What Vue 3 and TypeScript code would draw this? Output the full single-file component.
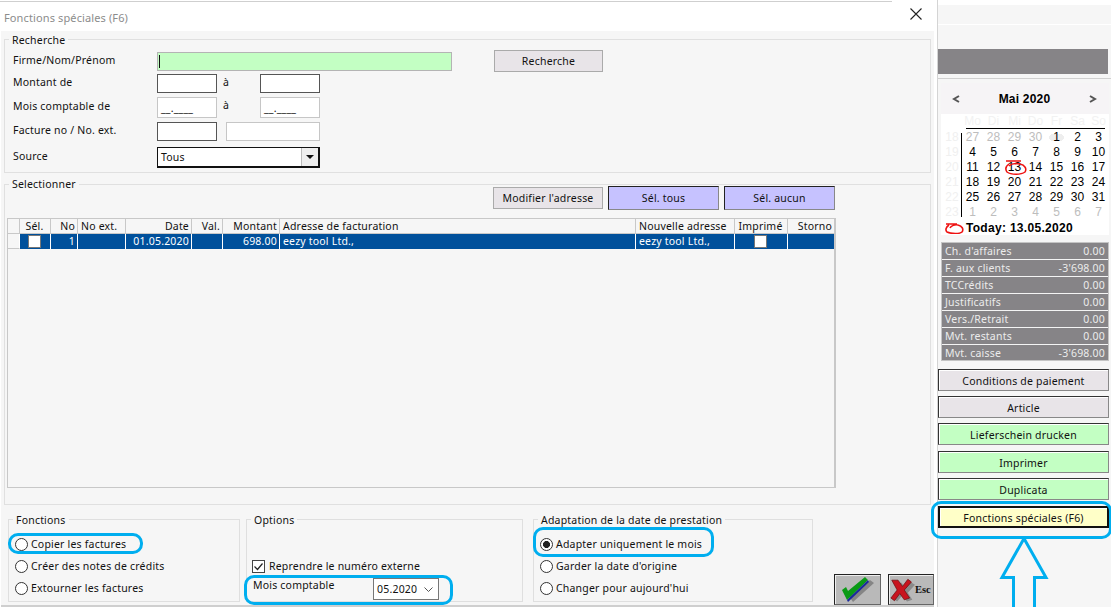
<script setup lang="ts">
interface Col { label: string; align: 'l' | 'r' | 'c'; value?: string; check?: boolean }

const columns: Col[] = [
  { label: '', align: 'l' },
  { label: 'Sél.', align: 'c', check: true },
  { label: 'No', align: 'r', value: '1' },
  { label: 'No ext.', align: 'l', value: '' },
  { label: 'Date', align: 'r', value: '01.05.2020' },
  { label: 'Val.', align: 'r', value: '' },
  { label: 'Montant', align: 'r', value: '698.00' },
  { label: 'Adresse de facturation', align: 'l', value: 'eezy tool Ltd.,' },
  { label: 'Nouvelle adresse', align: 'l', value: 'eezy tool Ltd.,' },
  { label: 'Imprimé', align: 'c', check: true },
  { label: 'Storno', align: 'r', value: '' }
]

const weekdays = ['', 'Mo', 'Di', 'Mi', 'Do', 'Fr', 'Sa', 'So']
const weeks: { no: number; days: number[] }[] = [
  { no: 18, days: [27, 28, 29, 30, 1, 2, 3] },
  { no: 19, days: [4, 5, 6, 7, 8, 9, 10] },
  { no: 20, days: [11, 12, 13, 14, 15, 16, 17] },
  { no: 21, days: [18, 19, 20, 21, 22, 23, 24] },
  { no: 22, days: [25, 26, 27, 28, 29, 30, 31] },
  { no: 23, days: [1, 2, 3, 4, 5, 6, 7] }
]
function isMuted(w: number, d: number): boolean {
  return (w === 0 && d > 20) || w === 5
}

const stats = [
  ['Ch. d\'affaires', '0.00'],
  ['F. aux clients', '-3\'698.00'],
  ['TCCrédits', '0.00'],
  ['Justificatifs', '0.00'],
  ['Vers./Retrait', '0.00'],
  ['Mvt. restants', '0.00'],
  ['Mvt. caisse', '-3\'698.00']
]

const sideButtons = [
  { label: 'Conditions de paiement', kind: 'grey' },
  { label: 'Article', kind: 'grey' },
  { label: 'Lieferschein drucken', kind: 'green wide-gap' },
  { label: 'Imprimer', kind: 'green' },
  { label: 'Duplicata', kind: 'green' },
  { label: 'Fonctions spéciales (F6)', kind: 'yellow' }
]

const fonctions = [
  { label: 'Copier les factures', on: false },
  { label: 'Créer des notes de crédits', on: false },
  { label: 'Extourner les factures', on: false }
]
const adaptation = [
  { label: 'Adapter uniquement le mois', on: true },
  { label: 'Garder la date d\'origine', on: false },
  { label: 'Changer pour aujourd\'hui', on: false }
]
</script>

<template>
  <div class="page">
    <div class="main">
      <header class="title">
        <span>Fonctions spéciales (F6)</span>
        <svg class="close" width="12" height="12" viewBox="0 0 12 12">
          <path d="M.5.5l11 11M11.5.5l-11 11" stroke="#222" stroke-width="1.1" fill="none" />
        </svg>
      </header>

      <div class="body">
        <fieldset class="group search">
          <legend>Recherche</legend>
          <div class="row r1">
            <label>Firme/Nom/Prénom</label>
            <div class="input firm"><i class="caret"></i></div>
            <button class="btn recherche">Recherche</button>
          </div>
          <div class="row r2">
            <label>Montant de</label>
            <div class="input dark"></div>
            <span class="a">à</span>
            <div class="input dark"></div>
          </div>
          <div class="row r3">
            <label>Mois comptable de</label>
            <div class="input light tall mask">__.____</div>
            <span class="a">à</span>
            <div class="input light tall mask">__.____</div>
          </div>
          <div class="row r4">
            <label>Facture no / No. ext.</label>
            <div class="input dark"></div>
            <div class="input light ext"></div>
          </div>
          <div class="row r5">
            <label>Source</label>
            <div class="source">
              <span>Tous</span>
              <span class="drop"><i></i></span>
            </div>
          </div>
        </fieldset>

        <fieldset class="group select">
          <legend>Selectionner</legend>
          <div class="actions">
            <button class="btn">Modifier l'adresse</button>
            <button class="btn lilac">Sél. tous</button>
            <button class="btn lilac">Sél. aucun</button>
          </div>
          <div class="table">
            <div class="tr head">
              <div v-for="(c, i) in columns" :key="i" class="td" :class="c.align">{{ c.label }}</div>
            </div>
            <div class="tr data">
              <div v-for="(c, i) in columns" :key="i" class="td" :class="[c.align, { ind: i === 0 }]">
                <i v-if="c.check" class="cell-check"></i>
                <template v-else>{{ c.value }}</template>
              </div>
            </div>
          </div>
        </fieldset>

        <div class="bottom">
          <fieldset class="group fn">
            <legend>Fonctions</legend>
            <div v-for="o in fonctions" :key="o.label" class="radio">
              <i class="dot" :class="{ on: o.on }"></i>{{ o.label }}
            </div>
          </fieldset>
          <fieldset class="group opt">
            <legend>Options</legend>
            <div class="check">
              <svg width="13" height="13" viewBox="0 0 13 13">
                <rect x=".5" y=".5" width="12" height="12" fill="#fff" stroke="#444" />
                <path d="M2.5 6.5l3 3 5-6" fill="none" stroke="#222" stroke-width="1.2" />
              </svg>
              Reprendre le numéro externe
            </div>
            <div class="month">
              <span>Mois comptable</span>
              <div class="month-select">
                <span>05.2020</span>
                <svg width="9" height="5" viewBox="0 0 9 5"><path d="M.5.5l4 4 4-4" fill="none" stroke="#555" /></svg>
              </div>
            </div>
          </fieldset>
          <fieldset class="group adapt">
            <legend>Adaptation de la date de prestation</legend>
            <div v-for="o in adaptation" :key="o.label" class="radio">
              <i class="dot" :class="{ on: o.on }"></i>{{ o.label }}
            </div>
          </fieldset>
          <div class="confirm">
            <button class="bevel">
              <svg width="34" height="26" viewBox="0 0 34 26">
                <path d="M7 18l5 7L33 6l-4-3L13 17l-3-3z" fill="#858585" />
                <path d="M1 13l5 10L27 3l-3-3L7 14l-2-4z" fill="#0a9a16" />
                <path d="M6 23L27 3l1 2L7 25z" fill="#1b2a9c" />
              </svg>
            </button>
            <button class="bevel esc">
              <svg width="25" height="26" viewBox="0 0 28 26">
                <path d="M6 5h7l4 6 6-7 5 3-8 9 5 8-6 2-5-7-6 7-4-3 7-8z" fill="#8a8a8a" />
                <path d="M2 2h7l5 7 6-8 4 3-8 9 6 9-6 2-5-7-6 8-4-3 7-9z" fill="#c8141e" stroke="#6a0b10" stroke-width=".8" />
              </svg>
              <b>Esc</b>
            </button>
          </div>
        </div>
      </div>
    </div>

    <aside class="side">
      <div class="side-top"></div>
      <div class="side-top second"></div>
      <div class="side-bar"></div>
      <div class="side-rule"></div>

      <div class="calendar">
        <div class="cal-head">
          <svg width="8" height="8" viewBox="0 0 8 8"><path d="M7 1L2 4l5 3" fill="none" stroke="#555" stroke-width="2" /></svg>
          <b>Mai 2020</b>
          <svg width="8" height="8" viewBox="0 0 8 8"><path d="M1 1l5 3-5 3" fill="none" stroke="#555" stroke-width="2" /></svg>
        </div>
        <div class="cal-grid names">
          <span v-for="(w, i) in weekdays" :key="i">{{ w }}</span>
        </div>
        <div class="cal-body">
          <div v-for="(w, wi) in weeks" :key="w.no" class="cal-grid">
            <span class="wk">{{ w.no }}</span>
            <span
              v-for="(d, di) in w.days"
              :key="di"
              :class="{ muted: isMuted(wi, d), first: wi === 0 && d === 1 }"
            >{{ d }}</span>
          </div>
          <svg class="ring" width="22" height="15" viewBox="0 0 22 15">
            <path d="M1 1h15M4 4C1 6 0 9 2 12c4 3 14 3 18 0 2-3 0-7-5-8-5-1-9 0-11 2" fill="none" stroke="#ee1111" stroke-width="1.5" />
          </svg>
        </div>
        <div class="today">
          <svg width="19" height="12" viewBox="0 0 19 12">
            <path d="M1 2h11M4 3C1 5 0 8 2 10c4 2 13 2 15 0 2-3 0-6-4-7-3-1-7 1-8 3" fill="none" stroke="#ee1111" stroke-width="1.6" />
          </svg>
          <b>Today: 13.05.2020</b>
        </div>
      </div>

      <div class="stats">
        <div v-for="s in stats" :key="s[0]" class="stat">
          <span>{{ s[0] }}</span><span>{{ s[1] }}</span>
        </div>
      </div>

      <div class="side-buttons">
        <button v-for="b in sideButtons" :key="b.label" class="side-btn" :class="b.kind">{{ b.label }}</button>
      </div>
    </aside>

    <!-- annotation overlays drawn over the captured window -->
    <i class="mark m-copier"></i>
    <i class="mark m-mois"></i>
    <i class="mark m-adapter"></i>
    <i class="mark m-f6"></i>
    <svg class="arrow" width="50" height="70" viewBox="0 0 50 70">
      <path d="M14.5 70V40.5H3L25 1.5l22 39H35.5V70" fill="#f6f6f6" stroke="#00aeef" stroke-width="3" />
    </svg>
  </div>
</template>

<style>
html, body { margin: 0; background: #fff; }
</style>

<style scoped>
.page {
  position: relative;
  display: flex;
  width: 1111px;
  height: 607px;
  overflow: hidden;
  background: #fff;
  color: #111;
  font-family: "Noto Sans", "Open Sans", sans-serif;
  font-size: 10.5px;
  letter-spacing: .2px;
}
.main { width: 937px; flex: none; display: flex; flex-direction: column; }
.title {
  position: relative;
  height: 31px;
  box-sizing: border-box;
  padding: 10px 0 0 4px;
  flex: none;
  color: #8c8c8c;
  font-size: 11px;
  letter-spacing: .12px;
  line-height: 16px;
  background: linear-gradient(#fff 1px, #cfcfcf 1px, #cfcfcf 2px, #fff 2px) no-repeat 0 0 / 892px 2px;
}
.close { position: absolute; left: 910px; top: 8px; }
.body {
  flex: 1;
  margin-left: 1px;
  margin-right: 3px;
  background: #f6f6f6;
  display: flex;
  flex-direction: column;
  border-bottom: 2px solid #cfcfcf;
}
.group {
  margin: 0;
  padding: 0;
  min-width: 0;
  box-sizing: border-box;
  border: 1px solid #e0e0e0;
}
.group legend {
  margin-left: 4px;
  padding: 0 3px;
  line-height: 15px;
  font-size: 10.5px;
}
.search { margin: 1px 3px 0 3px; height: 141px; padding: 3px 0 0 8px; position: relative; }
.search legend { margin-left: -4px; position: relative; top: 1px; }
.row { display: flex; align-items: flex-start; }
.row label { width: 144px; flex: none; line-height: 15px; }
.r1 { height: 22px; }
.r1 label { margin-top: 3px; }
.r2 { margin-top: 2px; height: 19px; }
.r3 { margin-top: 4px; height: 21px; }
.r4 { margin-top: 4px; height: 19px; }
.r5 { margin-top: 6px; height: 21px; }
.r2 label { margin-top: 1px; }
.r3 label { margin-top: 2px; }
.r4 label { margin-top: 1px; }
.r5 label { margin-top: 2px; }
.input { box-sizing: border-box; width: 60px; height: 19px; background: #fff; }
.input.dark { border: 1px solid #555; }
.input.light { border: 1px solid #c6c6c6; }
.input.tall { height: 21px; }
.input.ext { width: 94px; margin-left: 9px; }
.input.firm { width: 295px; margin-top: 2px; background: #c3ffc3; border: 1px solid #b4b4b4; padding: 2px 0 0 1px; }
.caret { display: block; width: 1px; height: 13px; background: #111; }
.mask { font-size: 10.5px; line-height: 21px; padding-left: 3px; }
.a { width: 43px; flex: none; padding-left: 6px; box-sizing: border-box; line-height: 15px; margin-top: 1px; }
.recherche { margin-left: 42px; width: 109px; height: 22px; }
.btn {
  box-sizing: border-box;
  height: 22px;
  padding: 0;
  background: #e8e4e8;
  border: 1px solid #aaa;
  color: #111;
  font: inherit;
  letter-spacing: inherit;
}
.btn.lilac {
  background: #c6c2ff;
  width: 111px;
  height: 24px;
  border-color: #222 #888 #888 #222;
  border-width: 1px;
}
.source {
  box-sizing: border-box;
  width: 163px;
  height: 21px;
  display: flex;
  align-items: center;
  justify-content: space-between;
  background: #fff;
  border: 1px solid #111;
  border-width: 1px 2px 2px 1px;
  padding-left: 3px;
}
.drop {
  width: 16px;
  height: 18px;
  background: #eee;
  border-left: 1px solid #bbb;
  display: flex;
  align-items: center;
  justify-content: center;
}
.drop i { width: 0; height: 0; border: 4px solid transparent; border-top: 4px solid #111; border-bottom: 0; }

.select { margin: 4px 3px 0 3px; height: 328px; padding: 0; position: relative; }
.actions {
  display: flex;
  justify-content: flex-end;
  align-items: flex-start;
  gap: 5px;
  width: 828px;
  height: 32px;
  margin-top: -6px;
  padding-top: 0;
  box-sizing: border-box;
  margin-left: 2px;
}
.actions .btn:first-child { width: 110px; margin-top: 1px; }
.table {
  box-sizing: border-box;
  width: 829px;
  height: 270px;
  margin: 0 0 0 2px;
  border: 1px solid #c8c8c8;
  border-width: 1px 2px 1px 1px;
}
.tr {
  display: grid;
  grid-template-columns: 12px 31px 27px 48px 66px 31px 57px 356px 99px 53px 1fr;
}
.head { height: 15px; box-sizing: border-box; border-bottom: 1px solid #c8c8c8; }
.td {
  box-sizing: border-box;
  border-right: 1px solid #c8c8c8;
  padding: 0 2px 0 3px;
  line-height: 15px;
  white-space: nowrap;
  overflow: hidden;
}
.td:last-child { border-right: 0; }
.td.r { text-align: right; }
.td.c { text-align: center; padding: 0 3px 0 2px; }
.data { height: 15px; background: #00509b; color: #fff; }
.data .td { border-right-color: #fff; color: #fff; }
.data .td.ind { background: #f6f6f6; border-bottom: 1px solid #c8c8c8; }
.cell-check { display: block; box-sizing: border-box; width: 13px; height: 13px; margin: 1px auto 0; background: #fff; border: 1px solid #777; }

.bottom {
  position: relative;
  display: flex;
  align-items: flex-start;
  padding: 7px 0 0 7px;
}
.bottom .group { height: 90px; border-color: #dfdfdf; margin-top: 0; }
.bottom .group legend { position: relative; top: 1px; }
.fn { width: 232px; }
.opt { width: 277px; margin-left: 6px !important; position: relative; }
.adapt { width: 280px; margin-left: 10px !important; }
.radio {
  display: flex;
  align-items: center;
  height: 22px;
  margin-left: 6px;
}
.radio:first-of-type { margin-top: 6px; }
.dot {
  box-sizing: border-box;
  width: 13px;
  height: 13px;
  margin-right: 3px;
  border: 1px solid #333;
  border-radius: 50%;
  background: #fff;
  flex: none;
}
.dot.on { background: radial-gradient(circle, #222 3.2px, #fff 3.8px); }
.check { display: flex; align-items: center; gap: 4px; margin: 31px 0 0 5px; height: 16px; }
.month { display: flex; align-items: flex-start; margin: 4px 0 0 6px; line-height: 15px; }
.month > span { width: 120px; flex: none; margin-top: 0; }
.month-select {
  box-sizing: border-box;
  width: 66px;
  height: 22px;
  display: flex;
  align-items: center;
  justify-content: space-between;
  padding: 0 5px 0 3px;
  background: #fff;
  border: 1px solid #777;
}
.confirm { position: absolute; left: 833px; top: 69px; display: flex; gap: 7px; }
.bevel {
  box-sizing: border-box;
  width: 47px;
  height: 31px;
  padding: 0;
  display: flex;
  align-items: center;
  justify-content: center;
  background: #b9b9b9;
  border: 1px solid #222;
  border-right-color: #666;
  border-bottom-color: #666;
  box-shadow: inset 1px 1px 0 #eee;
}
.bevel.esc { width: 46px; justify-content: flex-start; padding-left: 1px; gap: 0; }
.bevel b { font: bold 10.5px "Liberation Serif", serif; color: #111; }

.side {
  position: relative;
  width: 174px;
  flex: none;
  margin-left: 0;
  border-left: 1px solid #d4d4d4;
  background: #f6f6f6;
  box-sizing: border-box;
  display: flex;
  flex-direction: column;
  background-clip: padding-box;
}
.side-top { height: 19px; margin-top: 5px; background: #f6f6f6; box-shadow: 0 -5px 0 #fff; }
.side-top.second { height: 24px; margin-top: 1px; box-shadow: 0 -1px 0 #fff; }
.side-bar { height: 25px; background: #868487; width: 170px; }
.side-rule { height: 1px; margin-top: 4px; background: #d0d0d0; }
.calendar {
  margin: 4px 2px 0 3px;
  height: 152px;
  background: #fff;
  font-family: "Liberation Sans", sans-serif;
  font-size: 12px;
  letter-spacing: 0;
  color: #000;
}
.cal-head {
  display: flex;
  align-items: center;
  justify-content: space-between;
  height: 31px;
  padding: 0 12px 0 11px;
  background: #f6f4f6;
}
.cal-head b { font-size: 12px; letter-spacing: .2px; }
.cal-grid {
  display: grid;
  grid-template-columns: 20px repeat(7, 21px);
  padding-left: 1px;
  height: 15px;
  line-height: 15px;
  text-align: center;
  position: relative;
}
.names { color: #f2f2f2; margin-top: 0; height: 14px; }
.cal-body {
  position: relative;
  height: 94px;
  background:
    linear-gradient(#000, #000) no-repeat 25px 0 / 139px 1px,
    linear-gradient(#000, #000) no-repeat 20px 5px / 1px 84px;
  box-sizing: border-box;
  padding-top: 2px;
}
.wk { color: #f0f0f0; text-align: center; }
.muted { color: #bdbdbd; }
.first { background: radial-gradient(ellipse 8px 4px, #eee 98%, transparent); }
.ring { position: absolute; left: 64px; top: 32px; }
.today { display: flex; align-items: center; gap: 2px; margin: -1px 0 0 4px; }
.today b { font-size: 12px; letter-spacing: .3px; }
.stats {
  margin: 7px 2px 0 3px;
  height: 119px;
  box-sizing: border-box;
  border: 1px solid #c4c4c4;
  background: #868487;
  color: #ececec;
}
.stat {
  display: flex;
  justify-content: space-between;
  align-items: center;
  height: 16px;
  padding: 0 3px 0 3px;
  border-bottom: 1px solid #f4f4f4;
}
.stat:last-child { border-bottom: 0; }
.side-buttons { display: flex; flex-direction: column; margin-top: 8px; }
.side-btn {
  box-sizing: border-box;
  width: 171px;
  height: 22px;
  margin-bottom: 5px;
  padding: 2px 0 0;
  font: inherit;
  letter-spacing: inherit;
  color: #111;
  border: 1px solid #333;
  border-right-color: #888;
  border-bottom-color: #888;
  box-shadow: inset 1px 1px 0 #fff;
}
.wide-gap { margin-bottom: 6px; }
.grey { background: #e8e4e8; }
.green { background: #c3ffc3; }
.yellow {
  background: #ffffc8;
  border: 2px solid #111;
  margin-top: 1px;
  box-shadow: inset 1px 1px 0 #fff;
}

.mark {
  position: absolute;
  box-sizing: border-box;
  border: 3px solid #00aeef;
  border-radius: 10px;
  pointer-events: none;
}
.m-copier { left: 8px; top: 533px; width: 135px; height: 21px; }
.m-mois { left: 244px; top: 575px; width: 209px; height: 30px; }
.m-adapter { left: 533px; top: 527px; width: 181px; height: 30px; }
.m-f6 { left: 931px; top: 501px; width: 181px; height: 38px; }
.arrow { position: absolute; left: 999px; top: 537px; }
</style>
